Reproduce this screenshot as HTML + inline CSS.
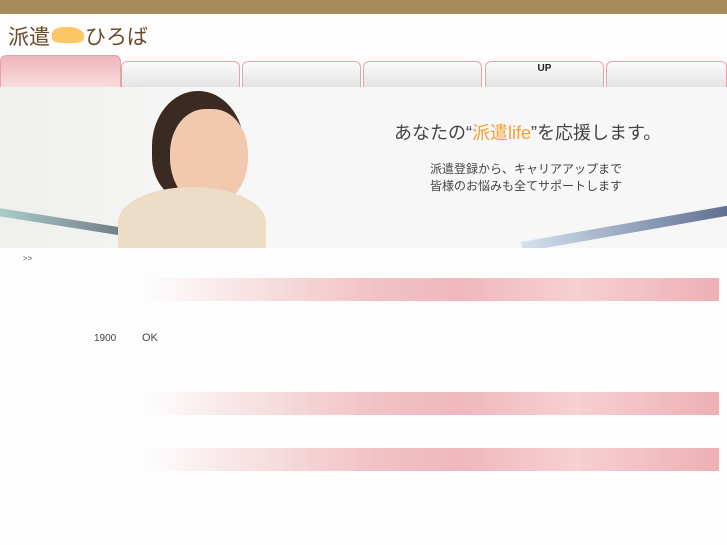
<!DOCTYPE html>
<html><head><meta charset="utf-8"><style>
body{margin:0;width:727px;height:545px;background:#fdfdfd;font-family:"Liberation Sans","Noto Sans CJK JP",sans-serif;position:relative;overflow:hidden}
.a{position:absolute}
.tab{position:absolute;top:61px;height:26px;width:119px;border:1px solid #e9a3a8;border-bottom:none;border-radius:6px 6px 0 0;background:linear-gradient(#fbfbfb,#e4e4e4);box-sizing:border-box}
.band{position:absolute;left:145px;width:574px;height:23px;background:linear-gradient(90deg,rgba(240,180,185,0),#f1c2c5 40%,#f0b8bc 55%,#f6d0d2 75%,#eeb0b4)}
</style></head><body>
<div class="a" style="top:0;left:0;width:727px;height:14px;background:#a88b5c"></div>
<div class="a" style="top:21px;left:8px;font-size:21px;color:#6b4a2a">派遣</div>
<div class="a" style="top:27px;left:52px;width:32px;height:16px;background:#fcc865;border-radius:40% 50% 30% 30%"></div>
<div class="a" style="top:21px;left:85px;font-size:21px;color:#6b4a2a">ひろば</div>
<div class="tab" style="left:0;top:55px;height:32px;width:121px;background:linear-gradient(#eeb5b8,#f9dcdd)"></div>
<div class="tab" style="left:121px"></div>
<div class="tab" style="left:242px"></div>
<div class="tab" style="left:363px"></div>
<div class="tab" style="left:485px"><div style="text-align:center;font-size:10px;font-weight:bold;margin-top:1px;color:#222">UP</div></div>
<div class="tab" style="left:606px;width:121px"></div>
<div class="a" style="top:87px;left:0;width:727px;height:161px;background:linear-gradient(90deg,#eef0ec,#f7f7f7 30%,#f7f7f7);overflow:hidden">
<div class="a" style="left:-20px;top:130px;width:150px;height:8px;background:linear-gradient(90deg,#9cc,#345);transform:rotate(9deg);opacity:.7"></div>
<div class="a" style="left:520px;top:135px;width:230px;height:10px;background:linear-gradient(90deg,#cde,#2a3f6b);transform:rotate(-10deg);opacity:.8"></div>
<div class="a" style="left:152px;top:4px;width:92px;height:110px;background:#3a2a22;border-radius:50% 50% 40% 40%"></div>
<div class="a" style="left:170px;top:22px;width:78px;height:98px;background:#f0c9ae;border-radius:45% 45% 50% 50%"></div>
<div class="a" style="left:118px;top:100px;width:148px;height:70px;background:#eddcc6;border-radius:50% 50% 0 0"></div>
<div class="a" style="left:394px;top:32px;font-size:18px;color:#444">あなたの“<span style="color:#f0a030">派遣life</span>”を応援します。</div>
<div class="a" style="left:430px;top:74px;font-size:12px;color:#444;line-height:17px">派遣登録から、キャリアアップまで<br>皆様のお悩みも全てサポートします</div>
</div>
<div class="a" style="top:254px;left:23px;font-size:8px;color:#555">&gt;&gt;</div>
<div class="band" style="top:278px"></div>
<div class="a" style="top:333px;left:94px;font-size:10px;color:#444">1900</div>
<div class="a" style="top:332px;left:142px;font-size:11px;color:#444">OK</div>
<div class="band" style="top:392px"></div>
<div class="band" style="top:448px"></div>
</body></html>
